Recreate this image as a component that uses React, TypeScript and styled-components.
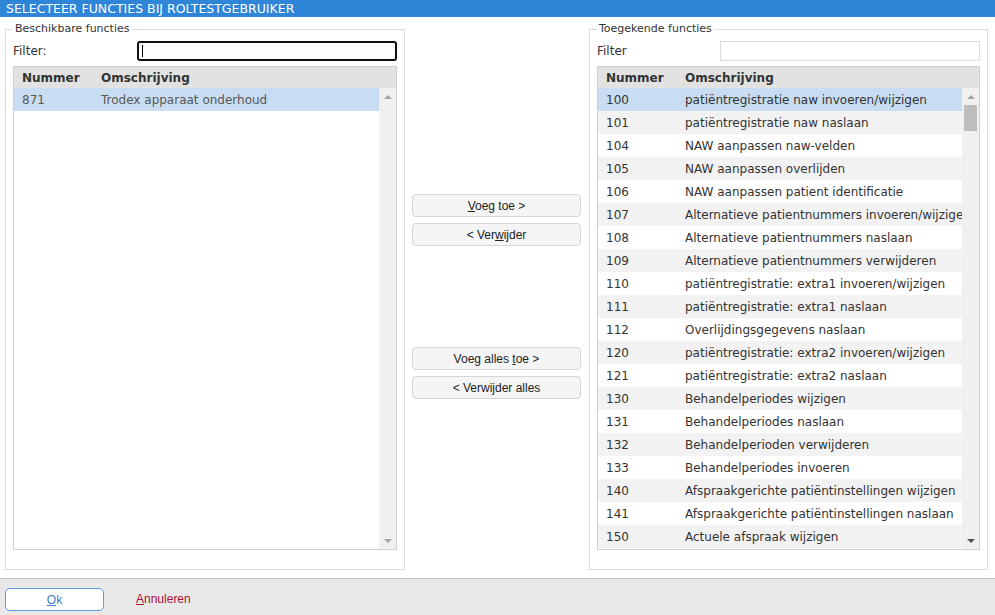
import React from 'react';
import styled, { createGlobalStyle } from 'styled-components';

const Global = createGlobalStyle`
  html, body { margin: 0; padding: 0; background: #fff; }
  body { font-family: "DejaVu Sans", Verdana, sans-serif; font-size: 12px; color: #333; }
  * { box-sizing: border-box; }
`;

const Page = styled.div`
  width: 995px;
  height: 615px;
  display: flex;
  flex-direction: column;
  overflow: hidden;
`;

const TitleBar = styled.div`
  height: 17px;
  flex: none;
  background: #2f86d9;
  color: #fff;
  padding-left: 6px;
  line-height: 17px;
  font-size: 12.5px;
  text-transform: uppercase;
  white-space: nowrap;
`;

const Main = styled.div`
  flex: 1;
  min-height: 0;
  display: flex;
  padding: 5px 7px 8px 5px;
`;

const Group = styled.fieldset<{ $w: number }>`
  width: ${p => p.$w}px;
  flex: none;
  min-width: 0;
  margin: 0;
  border: 1px solid #dcdcdc;
  padding: 5px 7px 19px;
  display: flex;
  flex-direction: column;
  gap: 5px;
`;

const Legend = styled.legend`
  padding: 0 2px;
  font-size: 11px;
  line-height: 14px;
  color: #333;
`;

const FilterRow = styled.div`
  height: 20px;
  flex: none;
  display: flex;
  align-items: center;
  justify-content: space-between;
`;

const FilterLabel = styled.span`
  color: #333;
`;

const FilterBox = styled.div<{ $focused?: boolean }>`
  width: 260px;
  height: 20px;
  background: #fff;
  display: flex;
  align-items: center;
  padding-left: 3px;
  border: ${p => (p.$focused ? '2px solid #111' : '1px solid #dcdcdc')};
  border-radius: ${p => (p.$focused ? '3px' : '0')};
`;

const Caret = styled.span`
  width: 1px;
  height: 12px;
  background: #000;
`;

const Table = styled.div`
  flex: 1;
  min-height: 0;
  display: flex;
  flex-direction: column;
  border: 1px solid #d0d0d0;
`;

const HeadRow = styled.div`
  height: 21px;
  flex: none;
  display: flex;
  align-items: center;
  background: #e2e2e2;
  font-weight: bold;
  color: #333;
`;

const NumCell = styled.div`
  width: 79px;
  flex: none;
  padding-left: 8px;
  white-space: nowrap;
`;

const DescCell = styled.div`
  padding-left: 8px;
  white-space: nowrap;
  overflow: hidden;
`;

const Body = styled.div`
  flex: 1;
  min-height: 0;
  display: flex;
`;

const Rows = styled.div`
  flex: 1;
  min-width: 0;
  overflow: hidden;
  display: flex;
  flex-direction: column;
`;

const Row = styled.div<{ $selected?: boolean; $alt?: boolean; $muted?: boolean }>`
  height: 23px;
  flex: none;
  display: flex;
  align-items: center;
  color: ${p => (p.$muted ? '#585858' : '#333')};
  background: ${p => (p.$selected ? '#c9ddf2' : p.$alt ? '#f2f2f2' : '#fff')};
`;

const ScrollTrack = styled.div`
  width: 17px;
  flex: none;
  background: #f0f0f0;
  display: flex;
  flex-direction: column;
  align-items: center;
`;

const Arrow = styled.div<{ $dir: 'up' | 'down'; $dark?: boolean }>`
  width: 17px;
  height: 17px;
  flex: none;
  display: flex;
  align-items: center;
  justify-content: center;
  &::after {
    content: '';
    border-left: 4px solid transparent;
    border-right: 4px solid transparent;
    ${p =>
      p.$dir === 'up'
        ? `border-bottom: 4px solid ${p.$dark ? '#505050' : '#a3a3a3'};`
        : `border-top: 4px solid ${p.$dark ? '#505050' : '#a3a3a3'};`}
  }
`;

const Thumb = styled.div`
  width: 13px;
  height: 26px;
  flex: none;
  background: #bdbdbd;
`;

const TrackSpace = styled.div`
  flex: 1;
`;

const Middle = styled.div`
  width: 184px;
  flex: none;
  display: flex;
  flex-direction: column;
  padding: 172px 0 0 7px;
`;

const ButtonGroup = styled.div<{ $gapTop?: number }>`
  display: flex;
  flex-direction: column;
  gap: 6px;
  margin-top: ${p => p.$gapTop ?? 0}px;
`;

const MoveButton = styled.button`
  width: 169px;
  height: 23px;
  margin: 0;
  padding: 0;
  background: #f5f5f5;
  border: 1px solid #d6d6d6;
  border-radius: 4px;
  font-family: "Liberation Sans", Arial, sans-serif;
  font-size: 12px;
  color: #222;
`;

const U = styled.span`
  text-decoration: underline;
`;

const Footer = styled.div`
  height: 37px;
  flex: none;
  background: #e8e8e8;
  border-top: 1px solid #c4c4c4;
  display: flex;
  align-items: flex-start;
  padding: 9px 0 0 5px;
  font-family: "Liberation Sans", Arial, sans-serif;
  font-size: 12px;
`;

const OkButton = styled.button`
  width: 99px;
  height: 23px;
  margin: 0;
  padding: 0;
  background: #fff;
  border: 1px solid #5a9de6;
  border-radius: 5px;
  color: #3a7fc8;
  font-family: "Liberation Sans", Arial, sans-serif;
  font-size: 12px;
`;

const CancelLink = styled.span`
  margin-left: 32px;
  line-height: 23px;
  color: #b0103a;
`;

const available = [{ n: '871', d: 'Trodex apparaat onderhoud' }];

const granted = [
  ['100', 'patiëntregistratie naw invoeren/wijzigen'],
  ['101', 'patiëntregistratie naw naslaan'],
  ['104', 'NAW aanpassen naw-velden'],
  ['105', 'NAW aanpassen overlijden'],
  ['106', 'NAW aanpassen patient identificatie'],
  ['107', 'Alternatieve patientnummers invoeren/wijzigen'],
  ['108', 'Alternatieve patientnummers naslaan'],
  ['109', 'Alternatieve patientnummers verwijderen'],
  ['110', 'patiëntregistratie: extra1 invoeren/wijzigen'],
  ['111', 'patiëntregistratie: extra1 naslaan'],
  ['112', 'Overlijdingsgegevens naslaan'],
  ['120', 'patiëntregistratie: extra2 invoeren/wijzigen'],
  ['121', 'patiëntregistratie: extra2 naslaan'],
  ['130', 'Behandelperiodes wijzigen'],
  ['131', 'Behandelperiodes naslaan'],
  ['132', 'Behandelperioden verwijderen'],
  ['133', 'Behandelperiodes invoeren'],
  ['140', 'Afspraakgerichte patiëntinstellingen wijzigen'],
  ['141', 'Afspraakgerichte patiëntinstellingen naslaan'],
  ['150', 'Actuele afspraak wijzigen'],
];

export default function App() {
  return (
    <Page>
      <Global />
      <TitleBar>Selecteer functies bij roltestgebruiker</TitleBar>
      <Main>
        <Group $w={400}>
          <Legend>Beschikbare functies</Legend>
          <FilterRow>
            <FilterLabel>Filter:</FilterLabel>
            <FilterBox $focused>
              <Caret />
            </FilterBox>
          </FilterRow>
          <Table>
            <HeadRow>
              <NumCell>Nummer</NumCell>
              <DescCell>Omschrijving</DescCell>
            </HeadRow>
            <Body>
              <Rows>
                {available.map((r, i) => (
                  <Row key={r.n} $selected={i === 0} $muted>
                    <NumCell>{r.n}</NumCell>
                    <DescCell>{r.d}</DescCell>
                  </Row>
                ))}
              </Rows>
              <ScrollTrack>
                <Arrow $dir="up" />
                <TrackSpace />
                <Arrow $dir="down" />
              </ScrollTrack>
            </Body>
          </Table>
        </Group>

        <Middle>
          <ButtonGroup>
            <MoveButton>
              <U>V</U>oeg toe &gt;
            </MoveButton>
            <MoveButton>
              &lt; Ver<U>w</U>ijder
            </MoveButton>
          </ButtonGroup>
          <ButtonGroup $gapTop={101}>
            <MoveButton>
              Voeg alles <U>t</U>oe &gt;
            </MoveButton>
            <MoveButton>&lt; Verwijder alles</MoveButton>
          </ButtonGroup>
        </Middle>

        <Group $w={399}>
          <Legend>Toegekende functies</Legend>
          <FilterRow>
            <FilterLabel>Filter</FilterLabel>
            <FilterBox />
          </FilterRow>
          <Table>
            <HeadRow>
              <NumCell>Nummer</NumCell>
              <DescCell>Omschrijving</DescCell>
            </HeadRow>
            <Body>
              <Rows>
                {granted.map(([n, d], i) => (
                  <Row key={n} $selected={i === 0} $alt={i % 2 === 1}>
                    <NumCell>{n}</NumCell>
                    <DescCell>{d}</DescCell>
                  </Row>
                ))}
              </Rows>
              <ScrollTrack>
                <Arrow $dir="up" />
                <Thumb />
                <TrackSpace />
                <Arrow $dir="down" $dark />
              </ScrollTrack>
            </Body>
          </Table>
        </Group>
      </Main>
      <Footer>
        <OkButton>
          <U>O</U>k
        </OkButton>
        <CancelLink>
          <U>A</U>nnuleren
        </CancelLink>
      </Footer>
    </Page>
  );
}
